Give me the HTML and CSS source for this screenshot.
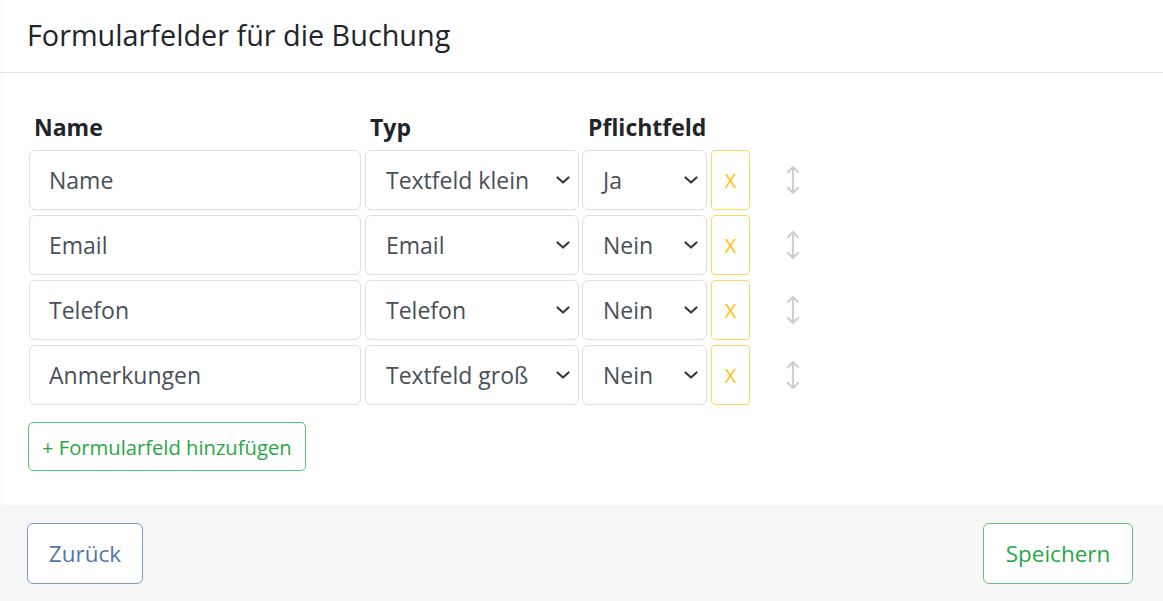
FILE: index.html
```html
<!DOCTYPE html>
<html lang="de">
<head>
<meta charset="utf-8">
<title>Formularfelder für die Buchung</title>
<link rel="stylesheet" href="styles.css">
</head>
<body>
<div class="modal">
  <header class="modal-header">
    <h5 class="modal-title">Formularfelder für die Buchung</h5>
  </header>
  <main class="modal-body">
    <div class="fields">
      <div class="row head">
        <div class="th th-name">Name</div>
        <div class="th">Typ</div>
        <div class="th th-req">Pflichtfeld</div>
      </div>
      <div class="row">
        <input class="control" type="text" value="Name">
        <div class="control select"><span>Textfeld klein</span><svg class="chev" viewBox="0 0 14 8"><path d="M1.5 1.5 7 6.5 12.5 1.5"/></svg></div>
        <div class="control select req"><span>Ja</span><svg class="chev" viewBox="0 0 14 8"><path d="M1.5 1.5 7 6.5 12.5 1.5"/></svg></div>
        <button class="btn-x">X</button>
        <svg class="move" viewBox="0 0 14 30"><path d="M7 2v26M2 7l5-5 5 5M2 23l5 5 5-5"/></svg>
      </div>
      <div class="row">
        <input class="control" type="text" value="Email">
        <div class="control select"><span>Email</span><svg class="chev" viewBox="0 0 14 8"><path d="M1.5 1.5 7 6.5 12.5 1.5"/></svg></div>
        <div class="control select req"><span>Nein</span><svg class="chev" viewBox="0 0 14 8"><path d="M1.5 1.5 7 6.5 12.5 1.5"/></svg></div>
        <button class="btn-x">X</button>
        <svg class="move" viewBox="0 0 14 30"><path d="M7 2v26M2 7l5-5 5 5M2 23l5 5 5-5"/></svg>
      </div>
      <div class="row">
        <input class="control" type="text" value="Telefon">
        <div class="control select"><span>Telefon</span><svg class="chev" viewBox="0 0 14 8"><path d="M1.5 1.5 7 6.5 12.5 1.5"/></svg></div>
        <div class="control select req"><span>Nein</span><svg class="chev" viewBox="0 0 14 8"><path d="M1.5 1.5 7 6.5 12.5 1.5"/></svg></div>
        <button class="btn-x">X</button>
        <svg class="move" viewBox="0 0 14 30"><path d="M7 2v26M2 7l5-5 5 5M2 23l5 5 5-5"/></svg>
      </div>
      <div class="row">
        <input class="control" type="text" value="Anmerkungen">
        <div class="control select"><span>Textfeld groß</span><svg class="chev" viewBox="0 0 14 8"><path d="M1.5 1.5 7 6.5 12.5 1.5"/></svg></div>
        <div class="control select req"><span>Nein</span><svg class="chev" viewBox="0 0 14 8"><path d="M1.5 1.5 7 6.5 12.5 1.5"/></svg></div>
        <button class="btn-x">X</button>
        <svg class="move" viewBox="0 0 14 30"><path d="M7 2v26M2 7l5-5 5 5M2 23l5 5 5-5"/></svg>
      </div>
    </div>
    <button class="btn-add">+ Formularfeld hinzufügen</button>
  </main>
  <footer class="modal-footer">
    <button class="btn btn-back">Zurück</button>
    <button class="btn btn-save">Speichern</button>
  </footer>
</div>
</body>
</html>
```
FILE: styles.css
```css
* { box-sizing: border-box; }
html, body { margin: 0; padding: 0; }
body {
  font-family: "Open Sans", "Noto Sans", sans-serif;
  color: #212529;
  background: #fff;
  width: 1163px;
  height: 601px;
  overflow: hidden;
}
.modal {
  display: flex;
  flex-direction: column;
  height: 601px;
  box-shadow: inset 9px 0 8px -6px rgba(0,0,0,0.025);
}
.modal-header {
  height: 73px;
  border-bottom: 1px solid #e3e6e9;
  display: flex;
  align-items: center;
  padding: 0 27px 2px;
}
.modal-title {
  margin: 0;
  font-size: 28.8px;
  font-weight: 400;
  line-height: 1.2;
  color: #212529;
}
.modal-body {
  flex: 1;
  padding: 39px 28px 0 29px;
}
.fields {
  display: flex;
  flex-direction: column;
  gap: 5px;
}
.row {
  display: grid;
  grid-template-columns: 332px 214px 124px 39px 60px;
  column-gap: 4px;
  align-items: center;
  height: 60px;
}
.row.head {
  height: auto;
  margin-bottom: 3px;
}
.th {
  font-weight: 700;
  font-size: 23px;
  line-height: 30px;
  padding-left: 5px;
}
.th-req { padding-left: 5px; }
.control {
  height: 60px;
  border: 1px solid #dcdfe3;
  border-radius: 6px;
  background: #fff;
  font-family: inherit;
  font-size: 23px;
  color: #495057;
  padding: 0 19px;
  width: 100%;
  outline: none;
}
.select {
  display: flex;
  align-items: center;
  justify-content: space-between;
  padding: 0 8px 0 20px;
}
.select.req {
  width: calc(100% + 1px);
  margin-left: -1px;
}
.chev {
  width: 14px;
  height: 8px;
  fill: none;
  stroke: #343a40;
  stroke-width: 2.2;
  stroke-linecap: round;
  stroke-linejoin: round;
}
.btn-x {
  height: 60px;
  width: 39px;
  border: 1px solid #ffd75c;
  border-radius: 4px;
  background: #fff;
  color: #ffc107;
  font-family: inherit;
  font-size: 20px;
  padding: 0;
}
.move {
  width: 14px;
  height: 30px;
  fill: none;
  stroke: #cfcfcf;
  stroke-width: 2.2;
  stroke-linecap: round;
  stroke-linejoin: round;
  justify-self: start;
  margin-left: 32px;
}
.btn-add {
  margin-top: 17px;
  height: 49px;
  padding: 0 13px;
  border: 1px solid #5cc27a;
  border-radius: 5px;
  background: #fff;
  color: #28a745;
  font-family: inherit;
  font-size: 20.2px;
  margin-left: -1px;
}
.modal-footer {
  height: 96px;
  background: #f7f7f7;
  display: flex;
  align-items: center;
  justify-content: space-between;
  padding: 0 30px 0 27px;
}
.btn {
  height: 61px;
  border-radius: 6px;
  font-family: inherit;
  font-size: 22.5px;
  background: #fff;
  padding: 0 20px;
}
.btn-back {
  border: 1px solid #7f9dc4;
  color: #4f76a8;
  width: 116px;
}
.btn-save {
  border: 1px solid #62c27d;
  color: #28a745;
  width: 150px;
}
```
